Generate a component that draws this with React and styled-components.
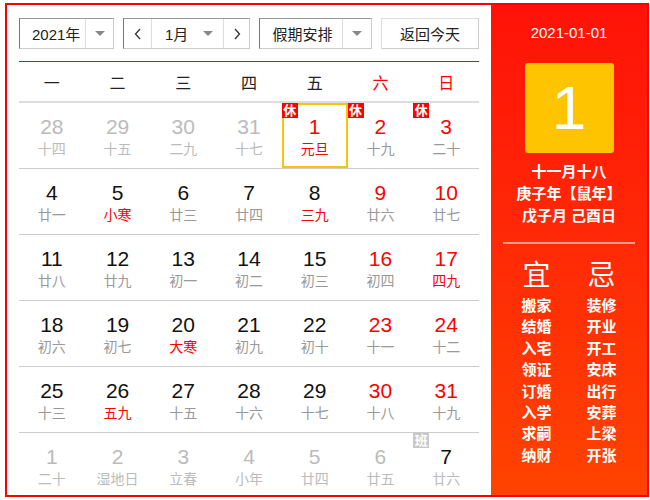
import React from 'react';
import styled, { createGlobalStyle } from 'styled-components';

const GlobalStyle = createGlobalStyle`
  body {
    margin: 0;
    background: #fff;
    font-family: "Liberation Sans", "Noto Sans CJK SC", sans-serif;
  }
`;

const Frame = styled.div`
  display: flex;
  width: 644px;
  height: 494px;
  margin: 3px 0 0 5px;
  border: 2px solid #f00;
  box-sizing: border-box;
  overflow: hidden;
`;

const Main = styled.div`
  width: 484px;
  padding: 13px 12px 0;
  box-sizing: border-box;
`;

const Toolbar = styled.div`
  display: flex;
  gap: 9px;
  height: 31px;
  padding-bottom: 12px;
  border-bottom: 1px solid #f00;
`;

const Box = styled.div`
  display: flex;
  width: ${(p) => p.w}px;
  box-sizing: border-box;
  border: 1px solid #ccc;
  border-top-color: ${(p) => (p.flat ? '#ddd' : '#999')};
  border-left-color: ${(p) => (p.flat ? '#ddd' : '#777')};
  font-size: 15px;
  color: #222;
`;

const Part = styled.div`
  display: flex;
  align-items: center;
  justify-content: ${(p) => p.justify || 'center'};
  width: ${(p) => (p.w ? `${p.w}px` : 'auto')};
  flex: ${(p) => (p.w ? 'none' : 1)};
  padding: ${(p) => p.pad || '0'};
  border-left: ${(p) => (p.divide ? '1px solid #ddd' : 'none')};
  box-sizing: border-box;
`;

const Caret = styled.span`
  width: 0;
  height: 0;
  border-left: 5px solid transparent;
  border-right: 5px solid transparent;
  border-top: 5px solid #888;
`;

const Chevron = styled.svg`
  width: 10px;
  height: 14px;
`;

const WeekRow = styled.div`
  display: grid;
  grid-template-columns: repeat(7, 1fr);
  height: 39px;
  align-items: center;
  border-bottom: 2px solid #ddd;
`;

const WeekName = styled.div`
  text-align: center;
  font-size: 16px;
  color: ${(p) => (p.weekend ? '#f00' : '#222')};
`;

const Row = styled.div`
  display: grid;
  grid-template-columns: repeat(7, 1fr);
  height: 65px;
  border-bottom: ${(p) => (p.last ? 'none' : '1px solid #ccc')};
`;

const Cell = styled.div`
  position: relative;
  display: flex;
  flex-direction: column;
  align-items: center;
  padding-top: 12px;
  box-sizing: border-box;
  box-shadow: ${(p) => (p.today ? 'inset 0 0 0 2px #fcc20d' : 'none')};
`;

const Num = styled.div`
  font-size: 21px;
  line-height: 24px;
  color: ${(p) => p.color};
`;

const Lunar = styled.div`
  margin-top: 1px;
  font-size: 14px;
  line-height: 18px;
  color: ${(p) => p.color};
`;

const Badge = styled.span`
  position: absolute;
  top: 0;
  left: 0;
  width: 16px;
  height: 15px;
  line-height: 15px;
  font-size: 13px;
  font-weight: bold;
  text-align: center;
  color: #fff;
  background: ${(p) => (p.work ? '#c8c8c8' : '#f00')};
`;

const Side = styled.div`
  flex: 1;
  display: flex;
  flex-direction: column;
  align-items: center;
  padding-top: 19px;
  background: linear-gradient(180deg, #ff1208 0%, #ff2a06 50%, #ff4300 100%);
  color: #fff;
`;

const DateText = styled.div`
  font-size: 15px;
  line-height: 18px;
`;

const DayBox = styled.div`
  display: flex;
  align-items: center;
  justify-content: center;
  width: 89px;
  height: 90px;
  margin-top: 21px;
  border-radius: 3px;
  background: #ffc400;
  font-size: 62px;
  line-height: 1;
`;

const LunarInfo = styled.div`
  margin-top: 8px;
  text-align: center;
  font-size: 15px;
  line-height: 22px;
  font-weight: bold;
`;

const Divider = styled.div`
  width: 132px;
  height: 2px;
  margin-top: 15px;
  background: #ff9c8c;
`;

const Almanac = styled.div`
  display: grid;
  grid-template-columns: 56px 56px;
  column-gap: 9px;
  margin-top: 16px;
  text-align: center;
`;

const Title = styled.div`
  font-size: 28px;
  line-height: 32px;
  margin-bottom: 3px;
`;

const Item = styled.div`
  font-size: 15px;
  line-height: 21.4px;
  font-weight: bold;
`;

// p: previous/next month, w: weekend, r: red lunar term, b: badge
const weeks = [
  [
    { d: 28, l: '十四', p: 1 }, { d: 29, l: '十五', p: 1 }, { d: 30, l: '二九', p: 1 },
    { d: 31, l: '十七', p: 1 }, { d: 1, l: '元旦', r: 1, b: '休', today: 1, red: 1 },
    { d: 2, l: '十九', w: 1, b: '休' }, { d: 3, l: '二十', w: 1, b: '休' },
  ],
  [
    { d: 4, l: '廿一' }, { d: 5, l: '小寒', r: 1 }, { d: 6, l: '廿三' }, { d: 7, l: '廿四' },
    { d: 8, l: '三九', r: 1 }, { d: 9, l: '廿六', w: 1 }, { d: 10, l: '廿七', w: 1 },
  ],
  [
    { d: 11, l: '廿八' }, { d: 12, l: '廿九' }, { d: 13, l: '初一' }, { d: 14, l: '初二' },
    { d: 15, l: '初三' }, { d: 16, l: '初四', w: 1 }, { d: 17, l: '四九', w: 1, r: 1 },
  ],
  [
    { d: 18, l: '初六' }, { d: 19, l: '初七' }, { d: 20, l: '大寒', r: 1 }, { d: 21, l: '初九' },
    { d: 22, l: '初十' }, { d: 23, l: '十一', w: 1 }, { d: 24, l: '十二', w: 1 },
  ],
  [
    { d: 25, l: '十三' }, { d: 26, l: '五九', r: 1 }, { d: 27, l: '十五' }, { d: 28, l: '十六' },
    { d: 29, l: '十七' }, { d: 30, l: '十八', w: 1 }, { d: 31, l: '十九', w: 1 },
  ],
  [
    { d: 1, l: '二十', p: 1 }, { d: 2, l: '湿地日', p: 1 }, { d: 3, l: '立春', p: 1 },
    { d: 4, l: '小年', p: 1 }, { d: 5, l: '廿四', p: 1 }, { d: 6, l: '廿五', p: 1 },
    { d: 7, l: '廿六', b: '班', work: 1 },
  ],
];

const good = ['搬家', '结婚', '入宅', '领证', '订婚', '入学', '求嗣', '纳财'];
const bad = ['装修', '开业', '开工', '安床', '出行', '安葬', '上梁', '开张'];

function numColor(c) {
  if (c.p) return '#bbb';
  if (c.w || c.red) return '#f00';
  return '#111';
}

function lunarColor(c) {
  if (c.p || c.work) return '#bbb';
  if (c.r) return '#f00';
  return '#999';
}

export default function App() {
  return (
    <>
      <GlobalStyle />
      <Frame>
        <Main>
          <Toolbar>
            <Box w={95}>
              <Part pad="0 0 0 12px" justify="flex-start">2021年</Part>
              <Part w={28} divide><Caret /></Part>
            </Box>
            <Box w={127}>
              <Part w={27}>
                <Chevron viewBox="0 0 10 14"><path d="M7 2 L2.5 7 L7 12" fill="none" stroke="#333" strokeWidth="1.3" /></Chevron>
              </Part>
              <Part divide pad="0 10px 0 13px" justify="space-between">1月<Caret /></Part>
              <Part w={26} divide>
                <Chevron viewBox="0 0 10 14"><path d="M3 2 L7.5 7 L3 12" fill="none" stroke="#333" strokeWidth="1.3" /></Chevron>
              </Part>
            </Box>
            <Box w={113}>
              <Part pad="0 0 0 3px">假期安排</Part>
              <Part w={29} divide><Caret /></Part>
            </Box>
            <Box w={98} flat>
              <Part>返回今天</Part>
            </Box>
          </Toolbar>
          <WeekRow>
            {['一', '二', '三', '四', '五', '六', '日'].map((n, i) => (
              <WeekName key={n} weekend={i > 4}>{n}</WeekName>
            ))}
          </WeekRow>
          {weeks.map((week, i) => (
            <Row key={i} last={i === weeks.length - 1}>
              {week.map((c, j) => (
                <Cell key={j} today={c.today}>
                  {c.b && <Badge work={c.work}>{c.b}</Badge>}
                  <Num color={numColor(c)}>{c.d}</Num>
                  <Lunar color={lunarColor(c)}>{c.l}</Lunar>
                </Cell>
              ))}
            </Row>
          ))}
        </Main>
        <Side>
          <DateText>2021-01-01</DateText>
          <DayBox>1</DayBox>
          <LunarInfo>
            <div>十一月十八</div>
            <div>庚子年【鼠年】</div>
            <div>戊子月 己酉日</div>
          </LunarInfo>
          <Divider />
          <Almanac>
            <div>
              <Title>宜</Title>
              {good.map((g) => <Item key={g}>{g}</Item>)}
            </div>
            <div>
              <Title>忌</Title>
              {bad.map((g) => <Item key={g}>{g}</Item>)}
            </div>
          </Almanac>
        </Side>
      </Frame>
    </>
  );
}
